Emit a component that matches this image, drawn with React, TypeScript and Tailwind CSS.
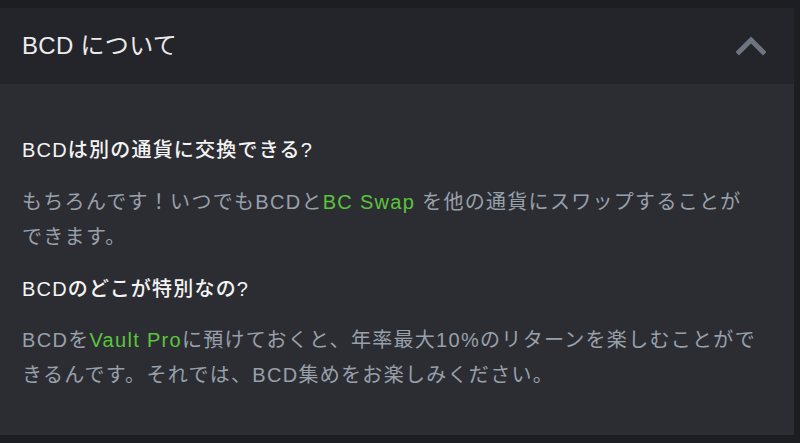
import React from 'react';

const font = { fontFamily: '"Liberation Sans", "Noto Sans CJK JP", sans-serif' };

const ChevronUp = () => (
  <svg width="30" height="20" viewBox="0 0 30 20" fill="none">
    <polyline points="3,16 15,4 27,16" stroke="#6e7480" strokeWidth="5" strokeLinecap="square" strokeLinejoin="miter" />
  </svg>
);

const Green: React.FC<{ children: React.ReactNode }> = ({ children }) => (
  <span className="text-[#5cc43c]">{children}</span>
);

export default function App() {
  return (
    <div className="w-[800px] h-[443px] bg-[#1d1e22] pt-2 pr-[6px] pb-2 overflow-hidden" style={font}>
      <div className="flex flex-col h-full">
        <div className="h-[76px] bg-[#24252a] flex items-center justify-between pl-[22px] pr-[28px]">
          <span className="text-[24px] tracking-[0.3px] text-[#ececec]">BCD について</span>
          <ChevronUp />
        </div>
        <div className="flex-1 bg-[#2c2d32] pl-[22px] pr-[20px] pt-[52px]">
          <h3 className="text-[20px] leading-[28px] tracking-[1.2px] font-medium text-[#f4f4f4]">
            BCDは別の通貨に交換できる?
          </h3>
          <p className="mt-[21px] text-[20px] leading-[35px] tracking-[1.3px] text-[#98a0ab] whitespace-nowrap">
            もちろんです！いつでもBCDと<Green>BC Swap</Green> を他の通貨にスワップすることが
            <br />
            できます。
          </p>
          <h3 className="mt-[20px] text-[20px] leading-[28px] tracking-[1.2px] font-medium text-[#f4f4f4]">
            BCDのどこが特別なの?
          </h3>
          <p className="mt-[20px] text-[20px] leading-[35px] tracking-[1.3px] text-[#98a0ab] whitespace-nowrap">
            BCDを<Green>Vault Pro</Green>に預けておくと、年率最大10%のリターンを楽しむことがで
            <br />
            きるんです。それでは、BCD集めをお楽しみください。
          </p>
        </div>
      </div>
    </div>
  );
}
